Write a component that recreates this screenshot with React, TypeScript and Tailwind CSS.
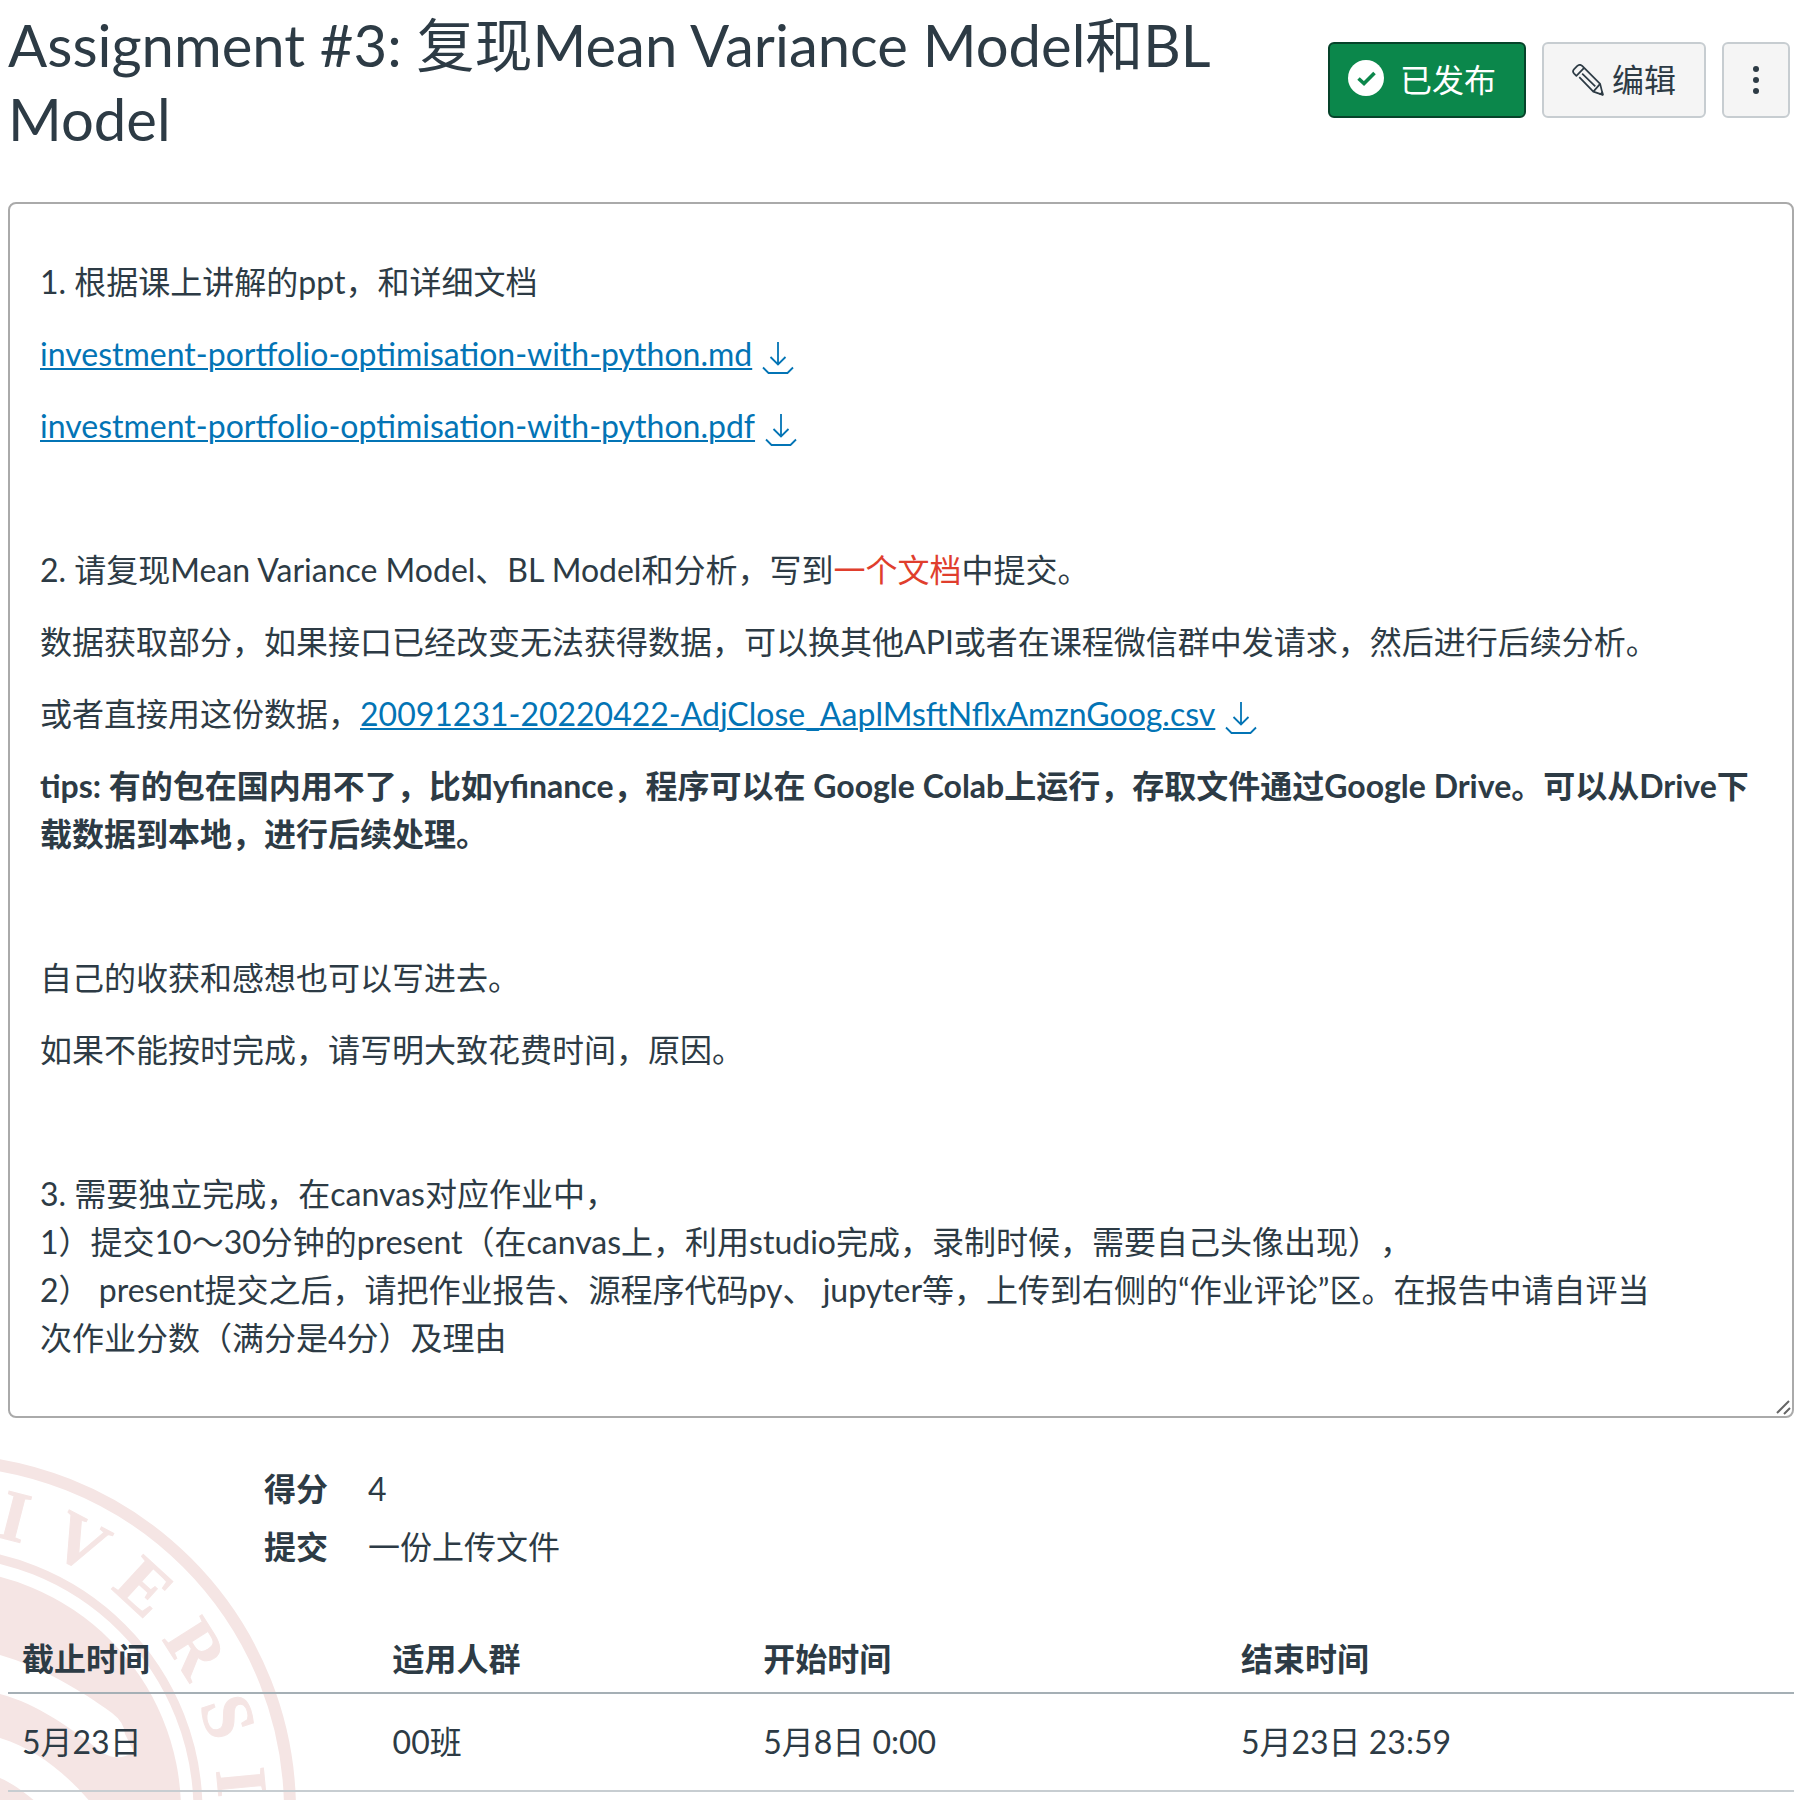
import React from "react";

const sealLetters = [
  { char: "I", angle: 14.4 },
  { char: "V", angle: 27.8 },
  { char: "E", angle: 42.5 },
  { char: "R", angle: 57.6 },
  { char: "S", angle: 71.9 },
  { char: "I", angle: 84.5 },
];

function Seal() {
  return (
    <svg
      viewBox="0 1440 320 360"
      className="pointer-events-none absolute top-[22px] left-0 -z-10 h-[360px] w-80"
      aria-hidden="true"
    >
      <g fill="none" stroke="#f5e5e4">
        <circle cx="-61" cy="1811" r="351" strokeWidth="12" />
        <circle cx="-61" cy="1811" r="259" strokeWidth="9" />
      </g>
      <circle cx="-61" cy="1811" r="242" fill="#f5e5e4" />
      <g fill="#fff">
        <path d="M0 1655C42 1667 82 1691 112 1713Q124 1722 125 1734L134 1752Q118 1762 103 1753C72 1729 38 1704 0 1694Z" />
        <path d="M0 1738C36 1749 66 1773 92 1804H38C27 1794 14 1784 0 1778Z" />
      </g>
      <g
        fill="#f5e5e4"
        stroke="#f5e5e4"
        strokeWidth="1"
        fontFamily="Liberation Serif, serif"
        fontWeight="700"
        fontSize="72"
        textAnchor="middle"
      >
        {sealLetters.map((l) => (
          <text key={l.angle} x="-61" y="1531" transform={`rotate(${l.angle} -61 1811)`}>
            {l.char}
          </text>
        ))}
      </g>
    </svg>
  );
}

function DownloadIcon() {
  return (
    <svg viewBox="0 0 32 32" className="inline-block size-8 align-middle" fill="none" stroke="currentColor" strokeWidth="1.8" aria-hidden="true">
      <path d="M16 0V22.500M8.500 15L16 22.500L23.500 15M1 25.500L6.500 31H25.500L31 25.500" />
    </svg>
  );
}

function PencilIcon() {
  return (
    <svg viewBox="0 0 33 33" className="size-8" fill="none" stroke="currentColor" strokeWidth="1.8" strokeLinejoin="round" aria-hidden="true">
      <path d="M7.500 13.500L22 28.500L31.800 31.800L29 20.500L10.500 2C9 0.600 7 0.700 5.500 2L2.200 5.300C0.800 6.700 0.800 8.500 2.200 10L4.500 12.200L12 4.500" />
      <path d="M22 28.500L29 20.500M10.500 10L24 23" />
      <path d="M28.500 31L31.500 28.500L32 32Z" fill="currentColor" strokeWidth="1" />
    </svg>
  );
}

function CheckBadge() {
  return (
    <svg viewBox="0 0 36 36" className="mb-1 size-9" aria-hidden="true">
      <circle cx="18" cy="18" r="18" fill="#fff" />
      <path d="M10.500 18.500L16 23.500L26.500 13" fill="none" stroke="#0b874b" strokeWidth="3.6" />
    </svg>
  );
}

function FileLink({ name }: { name: string }) {
  return (
    <>
      <a href="#file" className="text-[#0374b5] underline decoration-2 underline-offset-2">{name}</a>
      <a href="#download" aria-label={"下载 " + name} className="ml-[10px] text-[#0374b5]"><DownloadIcon /></a>
    </>
  );
}

const columns = [
  { label: "截止时间", value: "5月23日", width: "w-[20.75%]" },
  { label: "适用人群", value: "00班", width: "w-[20.75%]" },
  { label: "开始时间", value: "5月8日 0:00", width: "w-[26.75%]" },
  { label: "结束时间", value: "5月23日 23:59", width: "w-auto" },
];

export default function App() {
  return (
    <div lang="zh-CN" className="min-h-screen bg-white font-['Lato','Noto_Sans_CJK_SC',sans-serif] text-[32px] leading-[48px] text-[#2d3b45]">
      <header className="flex items-start justify-between gap-5 pt-2 pr-5 pl-2">
        <h1 className="flex-1 text-[58px] leading-[74px]">Assignment #3: 复现Mean Variance Model和BL Model</h1>
        <div className="mt-[34px] flex shrink-0 gap-4">
          <button className="flex h-[76px] items-center gap-4 rounded-md border-2 border-[#06432a] bg-[#0b874b] pr-7 pl-[18px] text-white">
            <CheckBadge />
            已发布
          </button>
          <button className="flex h-[76px] items-center gap-2 rounded-md border-2 border-[#c7cdd1] bg-[#f5f5f5] pr-7 pl-7">
            <PencilIcon />
            编辑
          </button>
          <button aria-label="更多选项" className="flex h-[76px] w-[68px] items-center justify-center rounded-md border-2 border-[#c7cdd1] bg-[#f5f5f5]">
            <svg viewBox="0 0 6 28" className="h-7 w-[6px]" fill="currentColor" aria-hidden="true">
              <circle cx="3" cy="3" r="3" />
              <circle cx="3" cy="14" r="3" />
              <circle cx="3" cy="25" r="3" />
            </svg>
          </button>
        </div>
      </header>

      <section className="relative mt-[46px] mr-4 ml-2 rounded-lg border-2 border-[#aaa] px-[30px] py-[54px]">
        <div className="space-y-6 [text-spacing-trim:space-all]">
          <p>1. 根据课上讲解的ppt，和详细文档</p>
          <p><FileLink name="investment-portfolio-optimisation-with-python.md" /></p>
          <p><FileLink name="investment-portfolio-optimisation-with-python.pdf" /></p>
          <p>&nbsp;</p>
          <p>2. 请复现Mean Variance Model、BL Model和分析，写到<span className="text-[#e03e2d]">一个文档</span>中提交。</p>
          <p>数据获取部分，如果接口已经改变无法获得数据，可以换其他API或者在课程微信群中发请求，然后进行后续分析。</p>
          <p>或者直接用这份数据，<FileLink name="20091231-20220422-AdjClose_AaplMsftNflxAmznGoog.csv" /></p>
          <p className="font-bold">tips: 有的包在国内用不了，比如yfinance，程序可以在 Google Colab上运行，存取文件通过Google Drive。可以从Drive下载数据到本地，进行后续处理。</p>
          <p>&nbsp;</p>
          <p>自己的收获和感想也可以写进去。</p>
          <p>如果不能按时完成，请写明大致花费时间，原因。</p>
          <p>&nbsp;</p>
          <p>
            3. 需要独立完成，在canvas对应作业中，<br />
            1）提交10～30分钟的present（在canvas上，利用studio完成，录制时候，需要自己头像出现），<br />
            2） present提交之后，请把作业报告、源程序代码py、 jupyter等，上传到右侧的“作业评论”区。在报告中请自评当<br />
            次作业分数（满分是4分）及理由
          </p>
        </div>
        <svg viewBox="0 0 16 16" className="absolute right-0 bottom-0 size-4" stroke="#666" strokeWidth="2" aria-hidden="true">
          <path d="M1 13L13 1M8 14L14 8" />
        </svg>
      </section>

      <section className="relative isolate pt-[47px] pr-4 pb-2 pl-2">
        <Seal />
        <dl className="grid grid-cols-[320px_1fr] gap-x-10 gap-y-[10px]">
          <dt className="text-right font-bold">得分</dt>
          <dd>4</dd>
          <dt className="text-right font-bold">提交</dt>
          <dd>一份上传文件</dd>
        </dl>
        <table className="mt-16 w-full table-fixed border-collapse text-left">
          <thead>
            <tr className="border-b-2 border-[#a5afb5]">
              {columns.map((c) => (
                <th key={c.label} scope="col" className={`px-[14px] pb-[9px] font-bold ${c.width}`}>{c.label}</th>
              ))}
            </tr>
          </thead>
          <tbody>
            <tr className="border-b-2 border-[#c7cdd1]">
              {columns.map((c) => (
                <td key={c.label} className="px-[14px] py-6">{c.value}</td>
              ))}
            </tr>
          </tbody>
        </table>
      </section>
    </div>
  );
}
